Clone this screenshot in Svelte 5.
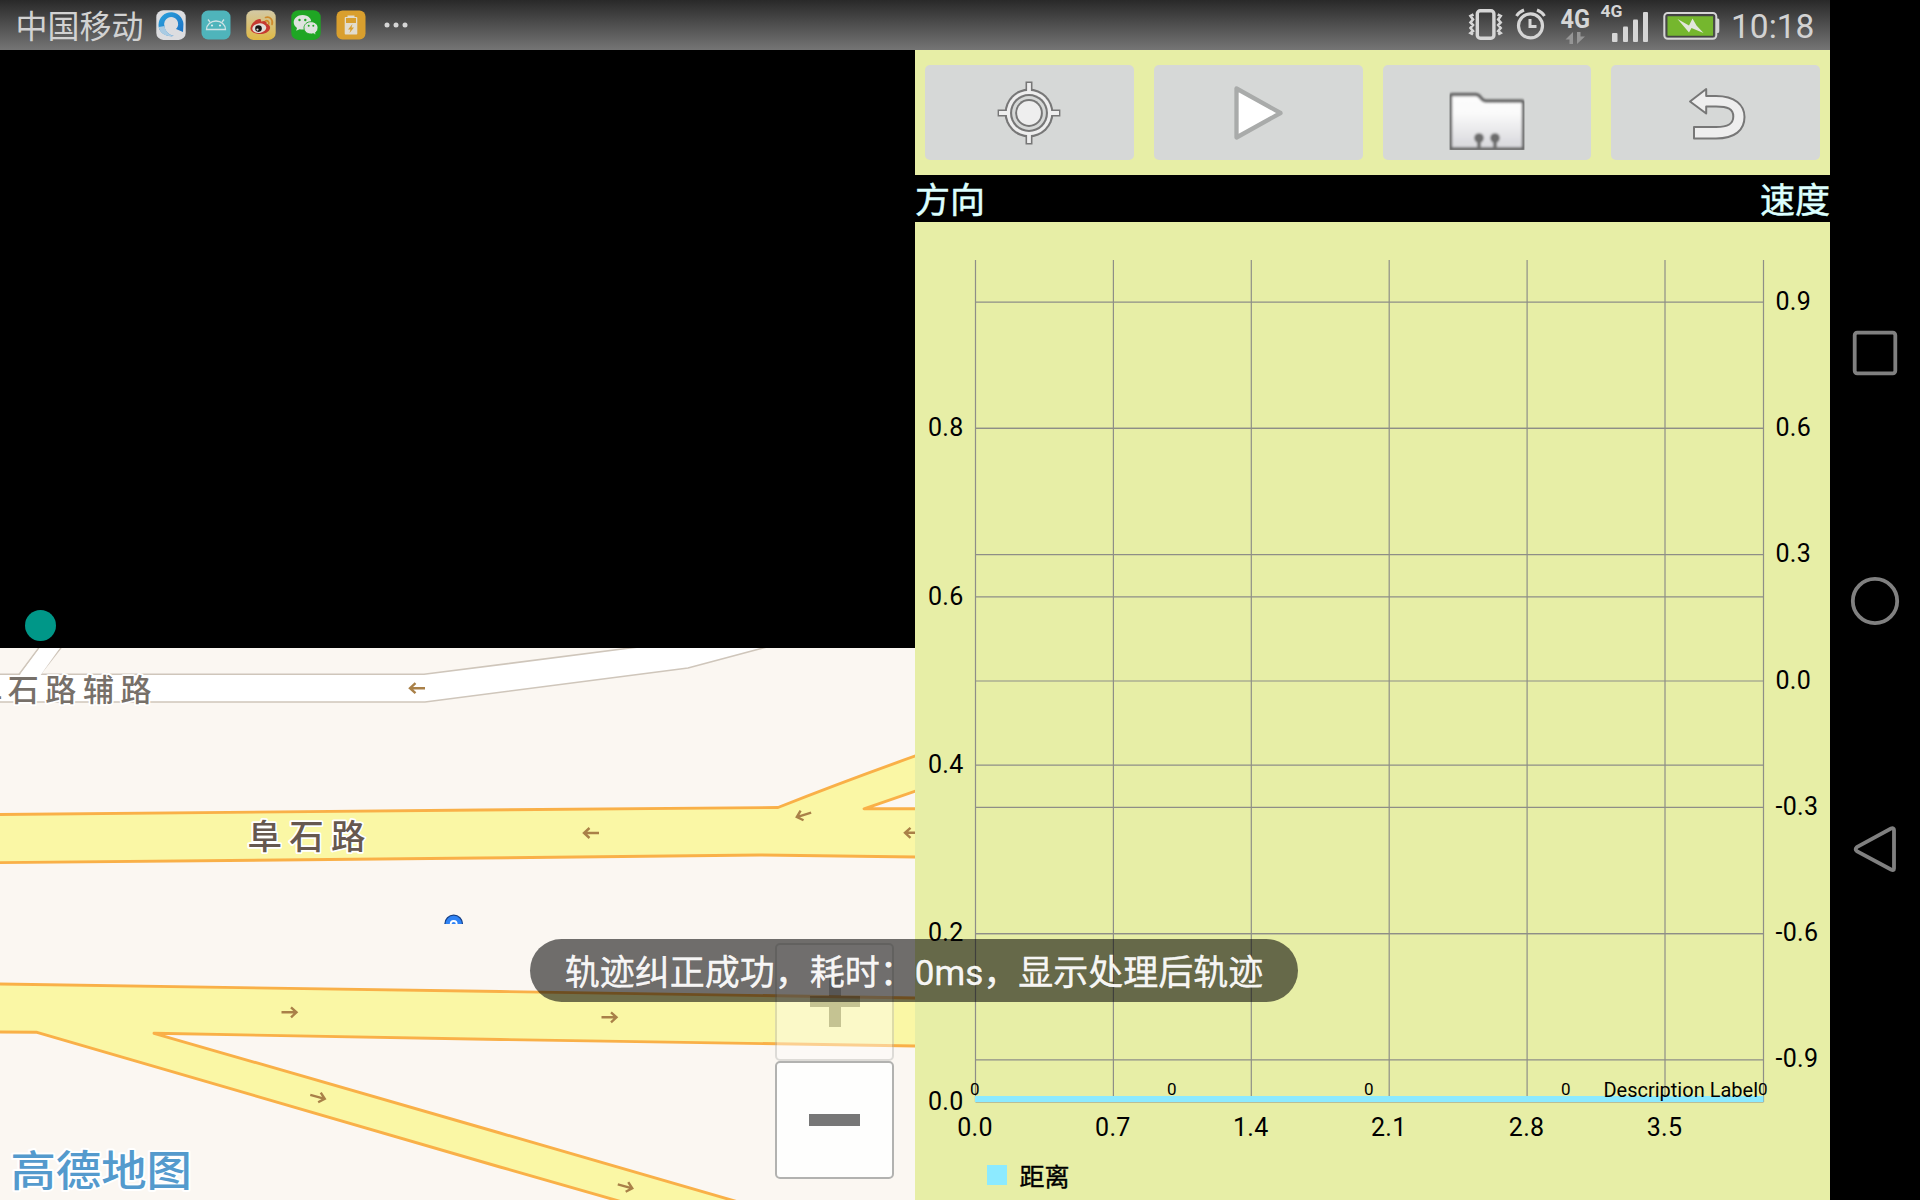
<script>
  // Chart geometry: plot area in the panel's own coordinates
  const left = 60.5;
  const right = 848.5;
  const top = 38;
  const bottom = 880;

  const xTicks = [0, 0.7, 1.4, 2.1, 2.8, 3.5].map((v) => ({
    label: v.toFixed(1),
    x: left + (v / 4) * (right - left),
  }));
  const leftTicks = [0, 0.2, 0.4, 0.6, 0.8].map((v) => ({
    label: v.toFixed(1),
    y: bottom - v * (bottom - top),
  }));
  const rightTicks = [-0.9, -0.6, -0.3, 0, 0.3, 0.6, 0.9].map((v) => ({
    label: v.toFixed(1),
    y: bottom - ((v + 1) / 2) * (bottom - top),
  }));
  const points = [0, 1, 2, 3, 4].map((v) => left - 0.7 + v * 197);

  const arrows = [
    { x: 417, y: 688.2, a: 180 },
    { x: 591, y: 833, a: 180 },
    { x: 803.5, y: 815, a: 163 },
    { x: 912, y: 832.8, a: 180 },
    { x: 289.5, y: 1012.3, a: 0 },
    { x: 609.5, y: 1017.3, a: 0 },
    { x: 318, y: 1097, a: 15 },
    { x: 625.5, y: 1186.5, a: 15 },
  ];
</script>

<div class="screen">
  <div class="app">
    <header class="status">
      <span class="carrier">中国移动</span>
      <div class="apps">
        <svg width="30" height="30" viewBox="0 0 30 30">
          <defs>
            <linearGradient id="q" x1="0" y1="0" x2="1" y2="1">
              <stop offset="0" stop-color="#2aa2dd" />
              <stop offset="1" stop-color="#1b6fc4" />
            </linearGradient>
          </defs>
          <rect x=".3" y=".3" width="29.4" height="29.6" rx="7" fill="#dcdde0" />
          <path d="M2.5 15A12.500 12.500 0 1 1 27.300 17L27 22L20 19A7 7 0 1 0 8.500 16C8.500 21 13 25 18 26C9 27 2.500 22 2.500 15Z" fill="url(#q)" />
          <path d="M2.700 17C4 23 9 27 18 26C13 25 9 21 8.500 16Z" fill="#a9cbe3" />
        </svg>
        <svg width="30" height="30" viewBox="0 0 30 30">
          <rect x=".5" y=".5" width="29" height="29" rx="6.500" fill="#4fb4bb" />
          <path d="M5.500 19.500A9.500 8.500 0 0 1 24.500 19.500ZM9 12L7 9.500M21 12L23 9.500" fill="none" stroke="#cfe3e5" stroke-width="1.300" />
          <circle cx="11" cy="15.500" r="1.100" fill="#dceced" /><circle cx="19" cy="15.500" r="1.100" fill="#dceced" />
        </svg>
        <svg width="30" height="30" viewBox="0 0 30 30">
          <defs>
            <linearGradient id="w" x1="0" y1="0" x2="0" y2="1">
              <stop offset="0" stop-color="#d3c9a5" /><stop offset="1" stop-color="#dfb945" />
            </linearGradient>
          </defs>
          <rect x=".3" y=".3" width="29.400" height="29.600" rx="7" fill="url(#w)" />
          <path d="M4.500 18C5 13 11 8.500 14 9C15.500 9.500 15 11 15 11.500C18 10.500 21 10.500 20.500 13.500C23 14.500 24.500 16 24 18.500C23 22.500 17.500 24.500 12.500 24C7.500 23.500 4.200 21 4.500 18Z" fill="#c63a30" />
          <ellipse cx="13.300" cy="18.200" rx="7" ry="4.800" fill="#e3ded7" transform="rotate(-8 13.300 18.200)" />
          <circle cx="12.500" cy="18.600" r="3.300" fill="#1a1614" /><circle cx="11.500" cy="19.600" r="1.100" fill="#ddd" />
          <path d="M19.500 7.500C24 6 27.500 10 26 14.500M19.500 11C21.500 10 23.500 12 22.700 14" fill="none" stroke="#cf8a2c" stroke-width="1.700" stroke-linecap="round" />
        </svg>
        <svg width="30" height="30" viewBox="0 0 30 30">
          <rect x=".3" y=".3" width="29.400" height="29.600" rx="7" fill="#1fa624" />
          <path d="M11.500 5C6.500 5 2.700 8.300 2.700 12.300C2.700 14.700 4 16.700 6 18L5.200 20.800L8.600 19.200C10 19.600 12 19.700 13.300 19.500C20 18 22 11 18.500 7.800C17 6 14.500 5 11.500 5Z" fill="#dfe3df" />
          <path d="M20 11.700C24 11.700 27 14.400 27 17.800C27 19.800 26 21.400 24.500 22.600L25.200 25L22.400 23.700C17 25 13 22 13 17.800C13 14.400 16 11.700 20 11.700Z" fill="#dfe3df" stroke="#1fa624" stroke-width=".9" />
          <g fill="#1fa624"><circle cx="8.500" cy="10" r="1.200" /><circle cx="14.300" cy="10" r="1.200" /><circle cx="17.700" cy="15.700" r="1" /><circle cx="22.300" cy="15.700" r="1" /></g>
        </svg>
        <svg width="30" height="30" viewBox="0 0 30 30">
          <rect x=".5" y=".5" width="29" height="29" rx="6" fill="#d99f2e" />
          <path d="M11.500 7V5.500H18.500V7H20.500Q21.300 7 21.300 8V23.500Q21.300 24.500 20.500 24.500H9.500Q8.700 24.500 8.700 23.500V8Q8.700 7 9.500 7Z" fill="#e2dccd" />
          <path d="M10 8H20V13H10Z" fill="#d99f2e" />
          <path d="M16.500 14L12 19.500H14.500L13.500 23L18 17.500H15.500Z" fill="#d99f2e" />
        </svg>
      </div>
      <svg class="more" width="26" height="8" viewBox="0 0 26 8" fill="#d6d6d6">
        <circle cx="4" cy="4" r="2.500" /><circle cx="13" cy="4" r="2.500" /><circle cx="22" cy="4" r="2.500" />
      </svg>
      <div class="signals">
        <svg width="42" height="50" viewBox="1465 0 42 50" fill="none" stroke="#d6d6d6">
          <rect x="1477.300" y="10.800" width="16.600" height="27.500" rx="3" stroke-width="3.400" />
          <path d="M1473.500 14.500L1470.500 16L1473 19.500L1470.500 22.500L1473 25L1470.500 28L1473 31L1470.500 33L1473 34.500M1497.700 14.500L1500.700 16L1498.200 19.500L1500.700 22.500L1498.200 25L1500.700 28L1498.200 31L1500.700 33L1498.200 34.500" stroke-width="2.600" />
        </svg>
        <svg width="46" height="50" viewBox="1507 0 46 50" fill="none" stroke="#d6d6d6">
          <circle cx="1530.500" cy="25.800" r="12" stroke-width="3.200" />
          <path d="M1530 19V26.500H1536.500" stroke-width="3" />
          <path d="M1516.500 16Q1519 12 1524 10M1544.500 16Q1542 12 1537 10" stroke-width="3" />
        </svg>
        <svg width="45" height="50" viewBox="1553 0 45 50">
          <text class="net" x="1560.500" y="28" font-size="25.500" textLength="29.500" lengthAdjust="spacingAndGlyphs">4G</text>
          <path d="M1573 32V44H1569.500V39.500H1565.500ZM1577 44V32H1580.500V36.500H1585Z" fill="#959595" />
        </svg>
        <svg width="58" height="50" viewBox="1598 0 58 50" fill="#d6d6d6">
          <text class="net" x="1600.500" y="17.300" font-size="17" textLength="22" lengthAdjust="spacingAndGlyphs">4G</text>
          <rect x="1612" y="33" width="5.500" height="9" rx="1" /><rect x="1623" y="26.500" width="5" height="15.500" rx="1" />
          <rect x="1633" y="19.500" width="5" height="22.500" rx="1" /><rect x="1643" y="12" width="5" height="30" rx="1" />
        </svg>
        <svg width="76" height="50" viewBox="1656 0 76 50">
          <rect x="1664.300" y="13" width="52" height="25.800" rx="3.500" fill="none" stroke="#d6d6d6" stroke-width="2" />
          <rect x="1666.800" y="15.500" width="47" height="20.800" rx="1" fill="#75b72e" stroke="#444" stroke-width="1.300" />
          <path d="M1717 18.500H1718Q1719.300 18.500 1719.300 20V31Q1719.300 33 1718 33H1717Z" fill="#d6d6d6" />
          <path d="M1677.500 19L1689 25.500L1692.500 18.500L1696.500 25.500L1703.500 33L1691.500 28L1689 32.500Z" fill="#e2e6dc" />
        </svg>
        <span class="clock">10:18</span>
      </div>
    </header>

    <div class="panes">
      <section class="map-pane">
        <div class="track"><i class="dot"></i></div>
        <div class="map">
          <svg class="canvas" width="915" height="552" viewBox="0 648 915 552">
            <defs>
              <clipPath id="half"><rect x="440" y="910" width="30" height="14" /></clipPath>
            </defs>
            <rect x="0" y="648" width="915" height="552" fill="#fbf7f2" />
            <g fill="#fff" stroke="#cfc6bb" stroke-width="1.600">
              <path d="M-3 674.300H424L630 648L700 640L790 641L763 648L688 668L425 702H-3Z" />
              <path d="M39.500 647L19 674.500M61.500 647L40 674.500" />
              <path d="M40.500 647L19 676H40L60.500 647Z" stroke="none" />
            </g>
            <g fill="#faf7a5" stroke="#f9b048" stroke-width="2.900" stroke-linejoin="round">
              <path d="M-4 814.500L480 810L778 807.500Q845 781 918 755V857L760 855L480 858L-4 862.700Z" />
              <path d="M864 808.800L917 790.500V808.800Z" fill="#fbf7f2" />
              <path d="M-4 984L500 991.500L918 998V1046L500 1039.500L154 1033.300L500 1133L740 1202.500H624L500 1167L37 1032.300L-4 1032Z" />
            </g>
            <g fill="none" stroke="#a98048" stroke-width="2.400">
              {#each arrows as a}
                <path d="M-8 0H7M1.500 -5L7 0L1.500 5" transform="translate({a.x} {a.y}) rotate({a.a})" />
              {/each}
            </g>
            <g clip-path="url(#half)">
              <circle cx="453.700" cy="924" r="8.800" fill="#2f83f5" stroke="#143f86" stroke-width="1.200" />
              <circle cx="453.700" cy="924" r="3" fill="none" stroke="#fff" stroke-width="1.800" />
            </g>
            <text class="road minor" x="-28.500 7.700 45.300 82.900 120.500" y="700.500">阜石路辅路</text>
            <text class="road major" x="247.500" y="849">阜石路</text>
            <text class="brand" transform="translate(10.500 1186) scale(1.080 1)" x="0" y="0">高德地图</text>
          </svg>
          <div class="zoom">
            <button class="key faded" aria-label="放大">
              <svg width="50" height="50" viewBox="0 0 50 50"><path d="M19 0H31V19H50V30H31V50H19V30H0V19H19Z" fill="#777" /></svg>
            </button>
            <button class="key" aria-label="缩小">
              <svg width="51" height="12" viewBox="0 0 51 12"><path d="M0 0H51V12H0Z" fill="#777" /></svg>
            </button>
          </div>
        </div>
      </section>

      <section class="data-pane">
        <div class="toolbar">
          <button aria-label="定位">
            <svg width="80" height="80" viewBox="-40 -40 80 80">
              <path d="M0 -30V30M-30 0H30" stroke="#777" stroke-width="7.500" stroke-linecap="square" stroke-linejoin="round" fill="none" transform="scale(.93 .93)" />
              <circle r="24.400" fill="#777" />
              <path d="M0 -30V30M-30 0H30" stroke="#eee" stroke-width="3.800" />
              <circle r="22.300" fill="#eee" />
              <circle r="19" fill="#777" /><circle r="16.900" fill="#d6d8d7" />
              <circle r="13.900" fill="#777" /><circle r="11.900" fill="#eee" />
            </svg>
          </button>
          <button aria-label="播放">
            <svg width="80" height="80" viewBox="1217.500 73 80 80">
              <path d="M1236 88.500V137.500L1280 113Z" fill="#fff" stroke="#a9abaa" stroke-width="4.300" stroke-linejoin="round" />
            </svg>
          </button>
          <button aria-label="文件">
            <svg width="80" height="80" viewBox="1446.500 73 80 80">
              <defs>
                <linearGradient id="f" x1="0" y1="0" x2="0" y2="1">
                  <stop offset="0" stop-color="#fdfdfd" /><stop offset=".35" stop-color="#fafafa" /><stop offset="1" stop-color="#d6d6da" />
                </linearGradient>
                <filter id="soft"><feGaussianBlur stdDeviation=".8" /></filter>
                <clipPath id="box"><rect x="1449" y="88" width="75" height="62" /></clipPath>
              </defs>
              <g clip-path="url(#box)">
                <g filter="url(#soft)">
                  <path d="M1450 96Q1450 94.500 1452 94.500H1475Q1478 94.500 1480 97.500Q1482.500 101 1486 101H1521Q1523 101 1523 103V149H1450Z" fill="url(#f)" stroke="#666" stroke-width="3.400" />
                  <path d="M1478.500 138V149M1494.500 138V149" stroke="#707070" stroke-width="3.800" />
                  <circle cx="1478.500" cy="138" r="4.800" fill="#6c6c6c" /><circle cx="1494.500" cy="138" r="4.800" fill="#6c6c6c" />
                </g>
              </g>
            </svg>
          </button>
          <button aria-label="返回">
            <svg width="80" height="80" viewBox="1676 73 80 80">
              <path d="M1690 101.500L1706.200 89V96H1716C1735 96 1744.500 105 1744.500 117C1744.500 130 1735 138.500 1716 138.500H1694V127H1716C1728 127 1733.300 124 1733.300 116.500C1733.300 109 1728 106.500 1716 106.500H1706.200V113.500Z" fill="#eee" stroke="#777" stroke-width="2" stroke-linejoin="round" />
            </svg>
          </button>
        </div>
        <div class="titles"><span>方向</span><span>速度</span></div>
        <svg class="chart" width="915" height="978" viewBox="0 0 915 978">
          <g stroke="#8e8e87" stroke-width="1.200">
            {#each xTicks as t}<path d="M{t.x} {top}V{bottom}" />{/each}
            <path d="M{right} {top}V{bottom}" />
            {#each leftTicks as t}<path d="M{left} {t.y}H{right}" />{/each}
            {#each rightTicks as t}<path d="M{left} {t.y}H{right}" />{/each}
          </g>
          <rect x="60" y="874" width="788.500" height="6" fill="#8ceaff" />
          <g class="ticks">
            {#each xTicks as t}<text x={t.x - 0.5} y="913.500" text-anchor="middle">{t.label}</text>{/each}
            {#each leftTicks as t}<text x="48.500" y={t.y + 7.7} text-anchor="end">{t.label}</text>{/each}
            {#each rightTicks as t}<text x="860.500" y={t.y + 7.5}>{t.label}</text>{/each}
          </g>
          <g class="values">
            {#each points as x}<text {x} y="873.300" text-anchor="middle">0</text>{/each}
          </g>
          <text class="description" x="843" y="875" text-anchor="end">Description Label</text>
          <rect x="72" y="943" width="20" height="20" fill="#8ceaff" />
          <text class="legend" x="104.500" y="963.500">距离</text>
        </svg>
      </section>
    </div>
  </div>

  <nav class="navbar">
    <svg width="50" height="50" viewBox="0 0 50 50"><rect x="4.700" y="4.700" width="40.600" height="40.600" rx="2.500" /></svg>
    <svg width="50" height="50" viewBox="0 0 50 50"><circle cx="25" cy="25" r="22.200" /></svg>
    <svg width="50" height="50" viewBox="0 0 50 50"><path d="M6.800 23.200L41 4.500Q44 3.500 44 6V44.500Q44 47 41 45.500L6.800 27.100Q4.500 25.200 6.800 23.200Z" /></svg>
  </nav>

  <div class="toast">轨迹纠正成功，耗时：0ms，显示处理后轨迹</div>
</div>

<style>
  :global(body) {
    margin: 0;
    background: #000;
  }
  .screen {
    position: relative;
    display: flex;
    width: 1920px;
    height: 1200px;
    overflow: hidden;
    background: #000;
    font-family: Roboto, 'Noto Sans CJK SC', sans-serif;
  }
  svg {
    display: block;
    flex: none;
  }
  button {
    display: flex;
    align-items: center;
    justify-content: center;
    box-sizing: border-box;
    margin: 0;
    padding: 0;
    border: 0;
  }
  .app {
    display: flex;
    flex-direction: column;
    width: 1830px;
  }
  .status {
    display: flex;
    align-items: center;
    box-sizing: border-box;
    height: 50px;
    padding-left: 15.500px;
    background: linear-gradient(#292929, #757575);
    color: #d2d2d2;
  }
  .carrier {
    width: 140px;
    font-size: 32px;
    font-weight: 400;
    line-height: 50px;
    white-space: nowrap;
    padding-top: 4px;
  }
  .apps {
    display: flex;
    gap: 15px;
  }
  .more {
    margin-left: 17px;
  }
  .signals {
    display: flex;
    align-items: center;
    height: 50px;
    margin-left: auto;
  }
  .net {
    font-weight: 700;
    fill: #d6d6d6;
  }
  .clock {
    width: 99px;
    font-size: 33.500px;
    line-height: 50px;
    padding-top: 3px;
    margin-left: -1px;
    white-space: nowrap;
  }
  .panes {
    display: flex;
    flex: 1;
  }
  .map-pane,
  .data-pane {
    display: flex;
    flex-direction: column;
    width: 915px;
  }
  .track {
    display: flex;
    align-items: flex-end;
    box-sizing: border-box;
    height: 598px;
    padding: 0 0 7px 25px;
  }
  .dot {
    width: 31px;
    height: 31px;
    border-radius: 50%;
    background: #009788;
  }
  .map {
    position: relative;
    height: 552px;
  }
  .road {
    font-family: 'Noto Sans CJK SC', sans-serif;
    font-weight: 500;
    stroke: #fff;
    stroke-width: 3.500px;
    stroke-linejoin: round;
    paint-order: stroke;
  }
  .minor {
    font-size: 31px;
    fill: #777069;
  }
  .major {
    font-size: 34.500px;
    letter-spacing: 7.200px;
    fill: #66584f;
  }
  .brand {
    font-family: 'Noto Sans CJK SC', sans-serif;
    font-size: 42px;
    font-weight: 500;
    fill: #549acd;
    stroke: #fff;
    stroke-width: 4px;
    stroke-linejoin: round;
    paint-order: stroke;
  }
  .zoom {
    position: absolute;
    right: 21px;
    bottom: 21px;
    display: flex;
    flex-direction: column;
  }
  .key {
    width: 119px;
    height: 118px;
    border: 2px solid #b2b2b0;
    border-radius: 5px;
    background: #fefefd;
  }
  .faded {
    opacity: 0.4;
  }
  .data-pane {
    background: #e7eea6;
  }
  .toolbar {
    display: grid;
    grid-template-columns: repeat(4, 1fr);
    gap: 20px;
    box-sizing: border-box;
    height: 125px;
    padding: 15px 10px;
  }
  .toolbar button {
    border-radius: 5px;
    background: #d6d8d7;
  }
  .titles {
    display: flex;
    justify-content: space-between;
    height: 47px;
    background: #000;
    color: #dcffff;
    font-size: 35px;
    line-height: 53px;
    -webkit-text-stroke: 0.500px #dcffff;
  }
  .ticks {
    font-size: 25px;
    letter-spacing: 0.300px;
  }
  .values {
    font-size: 17px;
  }
  .description {
    font-size: 20px;
  }
  .legend {
    font-size: 25px;
    stroke: #000;
    stroke-width: 0.400px;
  }
  .navbar {
    display: flex;
    flex-direction: column;
    align-items: center;
    gap: 198px;
    box-sizing: border-box;
    width: 90px;
    padding-top: 328px;
    fill: none;
    stroke: #808080;
    stroke-width: 3.800px;
  }
  .toast {
    position: absolute;
    left: 530px;
    top: 939px;
    box-sizing: border-box;
    width: 768px;
    height: 63px;
    border-radius: 32px;
    background: rgba(0, 0, 0, 0.555);
    color: rgba(255, 255, 255, 0.950);
    font-size: 35px;
    line-height: 69px;
    text-align: center;
    white-space: nowrap;
    -webkit-text-stroke: 0.400px rgba(255, 255, 255, 0.950);
  }
</style>
